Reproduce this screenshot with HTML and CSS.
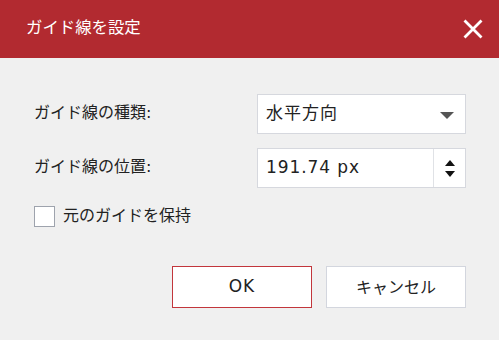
FILE: index.html
```html
<!DOCTYPE html>
<html lang="ja">
<head>
<meta charset="utf-8">
<link rel="stylesheet" href="styles.css">
</head>
<body>
<div class="dialog">
  <header class="titlebar">
    <span class="title">ガイド線を設定</span>
    <button class="close" aria-label="閉じる">
      <svg width="20" height="20" viewBox="0 0 20 20"><path d="M1.5 1.5 L18.5 18.5 M18.5 1.5 L1.5 18.5" stroke="#fff" stroke-width="2.8" stroke-linecap="butt" fill="none"/></svg>
    </button>
  </header>
  <main class="body">
    <div class="form">
      <label class="label">ガイド線の種類:</label>
      <div class="select">
        <span class="value cjk">水平方向</span>
        <span class="caret"></span>
      </div>
      <label class="label">ガイド線の位置:</label>
      <div class="number">
        <span class="value num">191.74 px</span>
        <span class="spin">
          <span class="up"></span>
          <span class="down"></span>
        </span>
      </div>
    </div>
    <label class="check">
      <span class="box"></span>
      <span class="check-text">元のガイドを保持</span>
    </label>
    <div class="buttons">
      <button class="btn ok">OK</button>
      <button class="btn">キャンセル</button>
    </div>
  </main>
</div>
</body>
</html>
```

FILE: styles.css
```css
html, body {
  margin: 0;
  padding: 0;
}
body {
  width: 499px;
  height: 340px;
  background: #f0f0f0;
  font-family: "DejaVu Sans", "Noto Sans CJK JP", sans-serif;
  color: #222;
  overflow: hidden;
}
.titlebar {
  height: 58px;
  background: #b22a30;
  display: flex;
  align-items: center;
  justify-content: space-between;
  padding: 0 16px 0 26px;
  box-sizing: border-box;
}
.title {
  color: #fff;
  font-size: 16.4px;
  line-height: 1;
  margin-top: -1px;
}
.close {
  border: 0;
  background: none;
  padding: 0;
  width: 21px;
  height: 21px;
  display: flex;
  align-items: center;
  justify-content: center;
}
.body {
  padding: 36px 33px 0 34px;
}
.form {
  display: grid;
  grid-template-columns: 223px 1fr;
  row-gap: 14px;
  align-items: center;
}
.label {
  font-size: 16px;
  color: #222;
  line-height: 1;
  margin-top: -2px;
}
.select, .number {
  height: 40px;
  box-sizing: border-box;
  background: #fff;
  border: 1px solid #d6d8de;
  display: flex;
  align-items: center;
}
.value {
  flex: 1;
  padding-left: 8px;
  font-size: 17px;
  line-height: 1;
  color: #222;
  margin-top: -2px;
}
.value.cjk {
  letter-spacing: 1px;
}
.value.num {
  letter-spacing: 0.9px;
}
.caret {
  width: 0;
  height: 0;
  border-left: 7px solid transparent;
  border-right: 7px solid transparent;
  border-top: 7px solid #555;
  margin-right: 11px;
  margin-top: 2px;
}
.spin {
  align-self: stretch;
  width: 31px;
  border-left: 1px solid #e0e2e6;
  display: flex;
  flex-direction: column;
  align-items: center;
  justify-content: center;
  gap: 5px;
}
.up {
  width: 0;
  height: 0;
  border-left: 5.5px solid transparent;
  border-right: 5.5px solid transparent;
  border-bottom: 6px solid #111;
}
.down {
  width: 0;
  height: 0;
  border-left: 5.5px solid transparent;
  border-right: 5.5px solid transparent;
  border-top: 6px solid #111;
}
.check {
  display: flex;
  align-items: center;
  gap: 8px;
  margin-top: 18px;
}
.box {
  width: 19px;
  height: 19px;
  background: #fff;
  border: 1px solid #9ea3ad;
  box-sizing: content-box;
}
.check-text {
  font-size: 16px;
  line-height: 1;
  color: #222;
  margin-top: -2px;
}
.buttons {
  display: flex;
  justify-content: flex-end;
  gap: 14px;
  margin-top: 39px;
}
.btn {
  width: 140px;
  height: 42px;
  box-sizing: border-box;
  background: #fff;
  border: 1px solid #d3d6de;
  font-family: "DejaVu Sans", "Noto Sans CJK JP", sans-serif;
  font-size: 16px;
  color: #222;
  padding: 0 0 2px;
}
.btn.ok {
  border-color: #c2363c;
  font-size: 17px;
  letter-spacing: 1px;
}
```
